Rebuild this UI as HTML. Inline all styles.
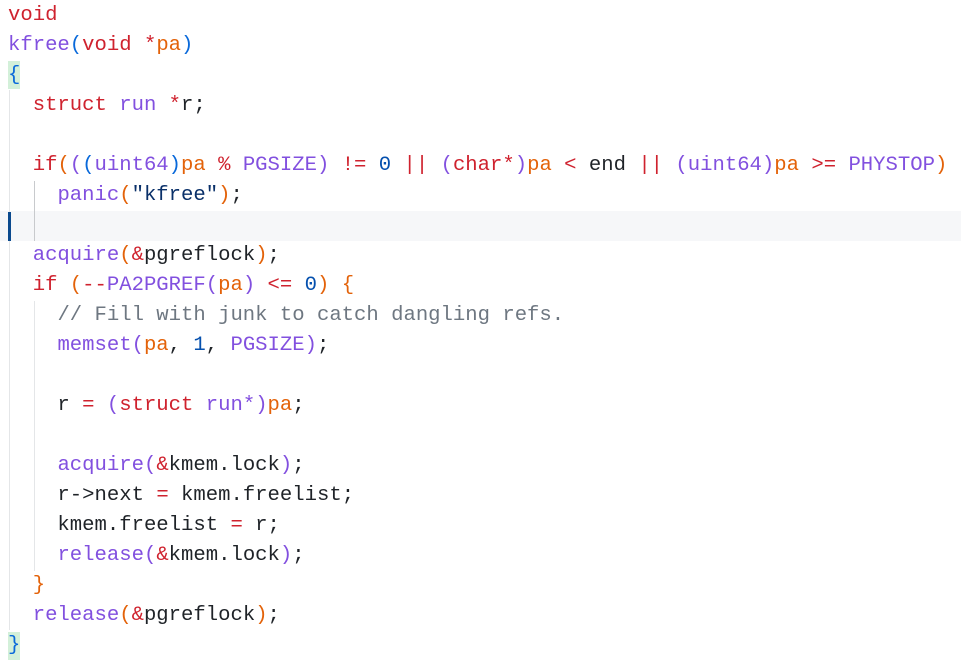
<!DOCTYPE html>
<html><head><meta charset="utf-8"><style>
html,body{margin:0;padding:0;background:#fff;width:961px;height:663px;overflow:hidden}
.ed{position:relative;width:961px;height:663px}
pre{position:absolute;left:8px;top:1px;margin:0;font-family:"Liberation Mono",monospace;font-size:20.6px;line-height:30px;color:#1f2328;white-space:pre}
.k{color:#cf222e}.f{color:#8250df}.v{color:#e36209}.n{color:#0550ae}.c{color:#6e7781}.s{color:#0a3069}
.b1{color:#0969da}.b2{color:#e36209}.b3{color:#8250df}
.g{position:absolute;width:1px;background:#e4e6e8}
.hl{position:absolute;left:0;top:211px;width:961px;height:30px;background:#f6f7f9}
.cur{position:absolute;left:8px;top:212px;width:3px;height:29px;background:#0b4a8e}
.bm{position:absolute;width:12px;height:28px;background:#d3f0d9}
</style></head><body><div class="ed">
<div class="hl"></div>
<div class="bm" style="left:8px;top:61px"></div>
<div class="bm" style="left:8px;top:632px"></div>
<div class="g" style="left:9px;top:90px;height:540px"></div>
<div class="g" style="left:34px;top:181px;height:60px;background:#c8cacd"></div>
<div class="g" style="left:34px;top:301px;height:270px"></div>
<div class="cur"></div>
<pre><span class="k">void</span>
<span class="f">kfree</span><span class="b1">(</span><span class="k">void</span> <span class="k">*</span><span class="v">pa</span><span class="b1">)</span>
<span class="b1">{</span>
  <span class="k">struct</span> <span class="f">run</span> <span class="k">*</span>r;

  <span class="k">if</span><span class="b2">(</span><span class="b3">(</span><span class="b1">(</span><span class="f">uint64</span><span class="b1">)</span><span class="v">pa</span> <span class="k">%</span> <span class="f">PGSIZE</span><span class="b3">)</span> <span class="k">!=</span> <span class="n">0</span> <span class="k">||</span> <span class="b3">(</span><span class="k">char*</span><span class="b3">)</span><span class="v">pa</span> <span class="k">&lt;</span> end <span class="k">||</span> <span class="b3">(</span><span class="f">uint64</span><span class="b3">)</span><span class="v">pa</span> <span class="k">&gt;=</span> <span class="f">PHYSTOP</span><span class="b2">)</span>
    <span class="f">panic</span><span class="b2">(</span><span class="s">"kfree"</span><span class="b2">)</span>;

  <span class="f">acquire</span><span class="b2">(</span><span class="k">&amp;</span>pgreflock<span class="b2">)</span>;
  <span class="k">if</span> <span class="b2">(</span><span class="k">--</span><span class="f">PA2PGREF</span><span class="b3">(</span><span class="v">pa</span><span class="b3">)</span> <span class="k">&lt;=</span> <span class="n">0</span><span class="b2">)</span> <span class="b2">{</span>
    <span class="c">// Fill with junk to catch dangling refs.</span>
    <span class="f">memset</span><span class="b3">(</span><span class="v">pa</span>, <span class="n">1</span>, <span class="f">PGSIZE</span><span class="b3">)</span>;

    r <span class="k">=</span> <span class="b3">(</span><span class="k">struct</span> <span class="f">run*</span><span class="b3">)</span><span class="v">pa</span>;

    <span class="f">acquire</span><span class="b3">(</span><span class="k">&amp;</span>kmem.lock<span class="b3">)</span>;
    r-&gt;next <span class="k">=</span> kmem.freelist;
    kmem.freelist <span class="k">=</span> r;
    <span class="f">release</span><span class="b3">(</span><span class="k">&amp;</span>kmem.lock<span class="b3">)</span>;
  <span class="b2">}</span>
  <span class="f">release</span><span class="b2">(</span><span class="k">&amp;</span>pgreflock<span class="b2">)</span>;
<span class="b1">}</span></pre>
</div></body></html>
